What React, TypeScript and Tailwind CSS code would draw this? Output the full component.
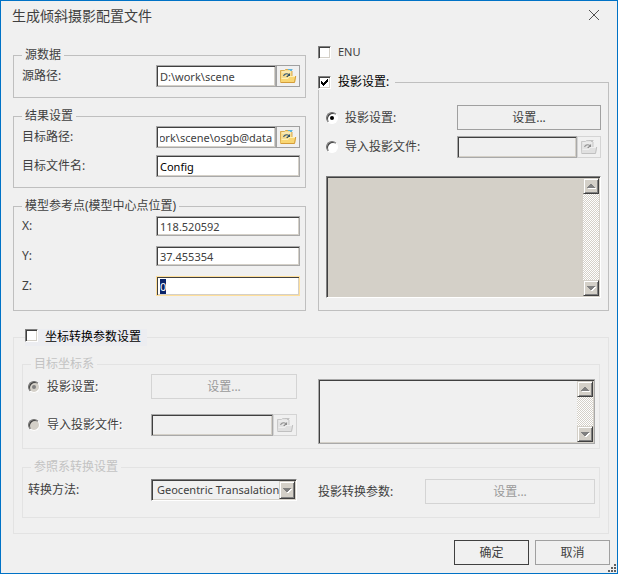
import React, { useEffect, useRef } from 'react';

const FolderIcon: React.FC<{ disabled?: boolean }> = ({ disabled }) => (
	<svg
		width="18"
		height="16"
		viewBox="0 0 18 16"
		className={disabled ? 'grayscale opacity-60' : ''}
		aria-hidden="true"
	>
		<path d="M1 14V2.500h4.500l1-1H13V14z" fill="#f6dc90" />
		<path d="M1.500 14V2.500h4l1-1H9" fill="none" stroke="#d9ab4e" />
		<path d="M13 3v6" stroke="#d9ab4e" />
		<path d="M9 1.500h4.500M11 2.500h2" stroke="#5fb4dc" />
		<path d="M3 4h9" stroke="#fdf4cf" />
		<path d="M4.500 8c1-2.500 4-3 5.500-1" fill="none" stroke="#45657a" strokeWidth="1.200" />
		<path d="M11 5v4H7z" fill="#2f5068" />
		<path d="M2 10h6.500l1-2H17l-1 6.500H1.500z" fill="#f9d673" />
		<path d="M2.500 10.500H9l1-2h6" fill="none" stroke="#fff0b4" />
		<path d="M1.500 14.500h14l1.200-6.500" fill="none" stroke="#d39c3a" />
	</svg>
);

const BrowseButton: React.FC<{ label: string; disabled?: boolean }> = ({ label, disabled }) => (
	<button
		type="button"
		aria-label={label}
		disabled={disabled}
		className={`flex h-[22px] w-6 shrink-0 items-center justify-center border ${
			disabled ? 'border-[#d4d4d4]' : 'border-[#a0a0a0]'
		}`}
	>
		<FolderIcon disabled={disabled} />
	</button>
);

const PushButton: React.FC<{
	children: React.ReactNode;
	className?: string;
	primary?: boolean;
	disabled?: boolean;
}> = ({ children, className = '', primary, disabled }) => (
	<button
		type="button"
		disabled={disabled}
		className={`h-[25px] border ${primary ? 'border-[#404040]' : 'border-[#a0a0a0]'} disabled:border-[#d4d4d4] disabled:text-[#9a9a9a] ${className}`}
	>
		{children}
	</button>
);

const sunken = 'shadow-[inset_1px_1px_#404040,inset_-1px_-1px_#d4d0c8]';
const field = `min-w-0 flex-1 border border-[#a9a9a9] bg-white px-[3px] text-[11px] outline-none disabled:bg-[#f0f0f0] ${sunken}`;

const CheckBox: React.FC<{ id: string; checked?: boolean }> = ({ id, checked }) => (
	<span className="relative flex shrink-0">
		<input
			id={id}
			type="checkbox"
			defaultChecked={checked}
			className="peer size-[13px] appearance-none border border-t-[#808080] border-r-white border-b-white border-l-[#808080] bg-white shadow-[inset_1px_1px_#404040,inset_-1px_-1px_#d4d0c8]"
		/>
		<svg
			width="13"
			height="13"
			viewBox="0 0 13 13"
			shapeRendering="crispEdges"
			className="pointer-events-none absolute inset-0 hidden peer-checked:block"
			aria-hidden="true"
		>
			<path d="M3 5h1v1h1v1h1v-1h1v-1h1v-1h1v-1h1v3h-1v1h-1v1h-1v1h-1v1h-1v-1h-1v-1h-1z" fill="#000" />
		</svg>
	</span>
);

const RadioOption: React.FC<{
	id: string;
	name: string;
	label: string;
	checked?: boolean;
	disabled?: boolean;
}> = ({ id, name, label, checked, disabled }) => (
	<div className="flex items-center gap-[7px] whitespace-nowrap">
		<input
			id={id}
			name={name}
			type="radio"
			defaultChecked={checked}
			disabled={disabled}
			className="flex size-3 shrink-0 appearance-none items-center justify-center rounded-full border border-t-[#707070] border-r-white border-b-white border-l-[#707070] bg-white shadow-[inset_1px_1px_#404040] before:hidden before:size-1 before:rounded-full before:bg-black checked:before:block disabled:bg-[#d4d0c8] disabled:before:bg-[#808080]"
		/>
		<label htmlFor={id} className={disabled ? '[text-shadow:1px_1px_#fff]' : ''}>
			{label}
		</label>
	</div>
);

const raised =
	'border border-t-[#d4d0c8] border-r-[#404040] border-b-[#404040] border-l-[#d4d0c8] bg-[#d4d0c8] shadow-[inset_1px_1px_#fff,inset_-1px_-1px_#808080]';

const Arrow: React.FC<{ direction: 'up' | 'down' }> = ({ direction }) => (
	<svg width="9" height="6" viewBox="0 0 9 6" shapeRendering="crispEdges" aria-hidden="true">
		{direction === 'up' ? (
			<>
				<path d="M1 5h8v1H1z" fill="#fff" />
				<path d="M3 1h2v1h1v1h1v1h1v1H0V4h1V3h1V2h1z" fill="#808080" />
			</>
		) : (
			<>
				<path d="M8 2h1v1H8v1H7v1H6v1H4V5h1V4h1V3h1V2z" fill="#fff" />
				<path d="M0 1h8v1H7v1H6v1H5v1H3V4H2V3H1V2H0z" fill="#808080" />
			</>
		)}
	</svg>
);

const ScrollButton: React.FC<{ direction: 'up' | 'down' }> = ({ direction }) => (
	<button
		type="button"
		disabled
		aria-label={direction === 'up' ? '向上滚动' : '向下滚动'}
		className={`flex size-4 items-center justify-center ${raised}`}
	>
		<Arrow direction={direction} />
	</button>
);

const InfoBox: React.FC<{ label: string; className: string }> = ({ label, className }) => (
	<div className={`flex border p-px ${sunken} ${className}`}>
		<textarea aria-label={label} disabled rows={1} className="block min-w-0 flex-1 resize-none" />
		<div className="flex flex-col justify-between bg-[repeating-conic-gradient(#fff_0_25%,#d4d0c8_0_50%)] bg-[length:2px_2px]">
			<ScrollButton direction="up" />
			<ScrollButton direction="down" />
		</div>
	</div>
);

const Group: React.FC<{
	title: string;
	className: string;
	disabled?: boolean;
	children: React.ReactNode;
}> = ({ title, className, disabled, children }) => (
	<fieldset
		className={`flex min-w-0 flex-col border ${disabled ? 'border-[#e3e3e3]' : 'border-[#bfbfbf]'} ${className}`}
	>
		<legend className={`h-4 px-[3px] ${disabled ? 'ml-[3px] text-[#c3c3c3]' : ''}`}>{title}</legend>
		{children}
	</fieldset>
);

const Row: React.FC<{ id: string; label: string; children: React.ReactNode }> = ({ id, label, children }) => (
	<div className="grid grid-cols-[134fr_144fr] items-center">
		<label htmlFor={id}>{label}</label>
		<div className="flex min-w-0">{children}</div>
	</div>
);

const App: React.FC = () => {
	const targetRef = useRef<HTMLInputElement>(null);
	const zRef = useRef<HTMLInputElement>(null);

	useEffect(() => {
		if (targetRef.current) {
			targetRef.current.scrollLeft = targetRef.current.scrollWidth;
		}
		zRef.current?.focus();
		zRef.current?.select();
	}, []);

	return (
		<div className="relative border border-[#0072c6] bg-[#f0f0f0] pr-2 pb-2 pl-3 font-['Noto_Sans','Noto_Sans_CJK_SC',sans-serif] text-xs leading-4 text-[#404040]">
			<header className="flex h-[43px] items-start justify-between pt-[3px]">
				<h1 className="-ml-px text-sm leading-6">生成倾斜摄影配置文件</h1>
				<button type="button" aria-label="关闭" className="mt-1 mr-2 p-px">
					<svg width="12" height="12" viewBox="0 0 12 12" stroke="#505050" aria-hidden="true">
						<path d="M1 1l10 10M11 1L1 11" />
					</svg>
				</button>
			</header>

			<div className="grid grid-cols-[293fr_291fr] gap-3">
				<div className="flex flex-col gap-[10px] pt-[3px]">
					<Group title="源数据" className="pt-[2px] pr-[5px] pb-[10px] pl-2">
						<Row id="source" label="源路径:">
							<input id="source" defaultValue="D:\work\scene" className={`h-[22px] ${field}`} />
							<BrowseButton label="浏览源路径" />
						</Row>
					</Group>

					<Group title="结果设置" className="gap-[7px] pt-[2px] pr-[5px] pb-[10px] pl-2">
						<Row id="target" label="目标路径:">
							<input
								id="target"
								ref={targetRef}
								defaultValue="D:\work\scene\osgb@data"
								className={`h-[22px] ${field}`}
							/>
							<BrowseButton label="浏览目标路径" />
						</Row>
						<Row id="filename" label="目标文件名:">
							<input id="filename" defaultValue="Config" className={`h-[22px] text-black ${field}`} />
						</Row>
					</Group>

					<Group title="模型参考点(模型中心点位置)" className="gap-[10px] pt-[2px] pr-[5px] pb-[14px] pl-2">
						<Row id="x" label="X:">
							<input id="x" defaultValue="118.520592" className={`h-5 ${field}`} />
						</Row>
						<Row id="y" label="Y:">
							<input id="y" defaultValue="37.455354" className={`h-5 ${field}`} />
						</Row>
						<Row id="z" label="Z:">
							<input
								id="z"
								ref={zRef}
								defaultValue="0"
								className={`h-5 selection:bg-[#0a246a] selection:text-white focus:border-[#ffdf9a] ${field}`}
							/>
						</Row>
					</Group>
				</div>

				<div className="flex flex-col gap-[14px]">
					<div className="flex h-4 items-center gap-[7px]">
						<CheckBox id="enu" />
						<label htmlFor="enu" className="text-[11px]">ENU</label>
					</div>

					<fieldset className="flex min-w-0 flex-1 flex-col border border-[#bfbfbf] px-[7px] pt-[15px] pb-3">
						<legend className="-ml-2 flex h-4 items-center gap-[7px] bg-[#f0f0f0] pr-[6px] text-black">
							<CheckBox id="projection" checked />
							<label htmlFor="projection">投影设置:</label>
						</legend>
						<div className="grid grid-cols-[131fr_144fr] items-center gap-y-[6px]">
							<RadioOption id="proj-set" name="proj" label="投影设置:" checked />
							<PushButton>设置...</PushButton>
							<RadioOption id="proj-import" name="proj" label="导入投影文件:" />
							<div className="flex min-w-0">
								<input aria-label="投影文件" disabled className={`h-[22px] ${field}`} />
								<BrowseButton label="浏览投影文件" disabled />
							</div>
						</div>
						<InfoBox
							label="投影信息"
							className="mt-[18px] min-h-[120px] flex-1 border-t-[#808080] border-r-white border-b-white border-l-[#808080] bg-[#d4d0c8]"
						/>
					</fieldset>
				</div>
			</div>

			<fieldset className="mt-[18px] min-w-0 border border-[#e3e3e3] px-2 pt-[10px] pb-[15px]">
				<legend className="ml-[3px] flex h-[17px] items-start gap-[7px] bg-[#ecedf1] pr-[6px] text-black">
					<CheckBox id="transform" />
					<label htmlFor="transform">坐标转换参数设置</label>
				</legend>

				<div className="flex flex-col gap-[10px]">
					<Group title="目标坐标系" className="pt-[2px] pr-1 pb-3 pl-[5px]" disabled>
						<div className="grid grid-cols-[269fr_277fr] gap-[21px]">
							<div className="grid grid-cols-[123fr_146fr] items-center gap-y-[15px]">
								<RadioOption id="crs-set" name="crs" label="投影设置:" checked disabled />
								<PushButton disabled>设置...</PushButton>
								<RadioOption id="crs-import" name="crs" label="导入投影文件:" disabled />
								<div className="flex min-w-0">
									<input aria-label="目标投影文件" disabled className={`h-[22px] ${field}`} />
									<BrowseButton label="浏览目标投影文件" disabled />
								</div>
							</div>
							<InfoBox label="目标坐标系信息" className="mt-[5px] -mb-[8px] border-[#a9a9a9]" />
						</div>
					</Group>

					<Group title="参照系转换设置" className="pt-1 pr-1 pb-[13px] pl-[5px]" disabled>
						<div className="grid grid-cols-[269fr_277fr] gap-[21px]">
							<div className="grid grid-cols-[123fr_146fr] items-start">
								<label htmlFor="method" className="py-[3px]">转换方法:</label>
								<div className="relative flex min-w-0">
									<select
										id="method"
										className={`h-[22px] w-full appearance-none border border-t-[#808080] border-r-white border-b-white border-l-[#808080] pr-4 pl-[5px] text-[11px] outline-none ${sunken}`}
									>
										<option>Geocentric Transalation(3-para)</option>
									</select>
									<span
										className={`pointer-events-none absolute inset-y-[2px] right-[2px] flex w-4 items-center justify-center ${raised}`}
									>
										<Arrow direction="down" />
									</span>
								</div>
							</div>
							<div className="grid grid-cols-[107fr_170fr] items-center">
								<span>投影转换参数:</span>
								<PushButton disabled>设置...</PushButton>
							</div>
						</div>
					</Group>
				</div>
			</fieldset>

			<footer className="-mr-px mt-[6px] flex justify-end gap-[6px]">
				<PushButton className="w-[75px]" primary>确定</PushButton>
				<PushButton className="w-[75px]">取消</PushButton>
			</footer>

			<svg
				width="9"
				height="9"
				viewBox="0 0 9 9"
				fill="#606060"
				shapeRendering="crispEdges"
				className="absolute right-0 bottom-0"
				aria-hidden="true"
			>
				<path d="M6 0h2v2H6zM3 3h2v2H3zM6 3h2v2H6zM0 6h2v2H0zM3 6h2v2H3zM6 6h2v2H6z" />
			</svg>
		</div>
	);
};

export default App;
